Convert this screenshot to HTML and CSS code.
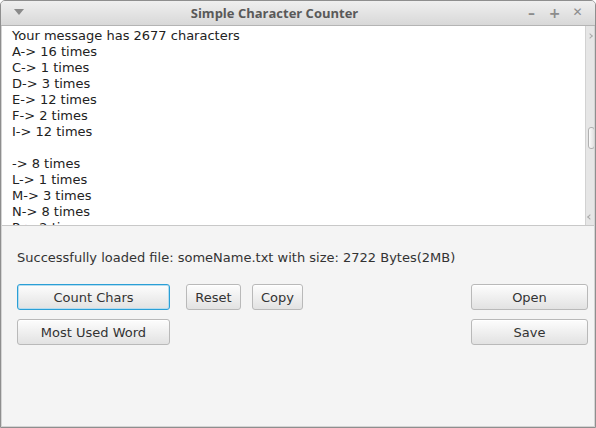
FILE: index.html
```html
<!DOCTYPE html>
<html>
<head>
<meta charset="utf-8">
<link rel="stylesheet" href="styles.css">
</head>
<body>
<div class="window">
  <div class="titlebar">
    <div class="menu-tri"></div>
    <div class="title">Simple Character Counter</div>
    <div class="controls">
      <span class="ctl">&#8211;</span>
      <span class="ctl">+</span>
      <span class="ctl x">&#10005;</span>
    </div>
  </div>
  <div class="textarea">
    <div class="content">
      <div class="line">Your message has 2677 characters</div>
      <div class="line">A-&gt; 16 times</div>
      <div class="line">C-&gt; 1 times</div>
      <div class="line">D-&gt; 3 times</div>
      <div class="line">E-&gt; 12 times</div>
      <div class="line">F-&gt; 2 times</div>
      <div class="line">I-&gt; 12 times</div>
      <div class="line">&nbsp;</div>
      <div class="line">-&gt; 8 times</div>
      <div class="line">L-&gt; 1 times</div>
      <div class="line">M-&gt; 3 times</div>
      <div class="line">N-&gt; 8 times</div>
      <div class="line">P-&gt; 2 times</div>
    </div>
    <div class="scrollbar">
      <div class="arrow up"></div>
      <div class="thumb"></div>
      <div class="arrow down"></div>
    </div>
  </div>
  <div class="panel">
    <div class="status">Successfully loaded file: someName.txt with size: 2722 Bytes(2MB)</div>
    <div class="rows">
      <div class="row">
        <div class="left">
          <button class="btn wide focused">Count Chars</button>
          <button class="btn small">Reset</button>
          <button class="btn small copy">Copy</button>
        </div>
        <button class="btn side">Open</button>
      </div>
      <div class="row">
        <div class="left">
          <button class="btn wide">Most Used Word</button>
        </div>
        <button class="btn side">Save</button>
      </div>
    </div>
  </div>
</div>
</body>
</html>
```

FILE: styles.css
```css
html, body {
  margin: 0;
  padding: 0;
  width: 596px;
  height: 428px;
  overflow: hidden;
  background: #ffffff;
}
.window {
  box-sizing: border-box;
  width: 596px;
  height: 428px;
  border: 1px solid #8e8e8e;
  border-radius: 5px 5px 0 0;
  box-shadow: inset 0 0 0 1px #d4d4d4;
  background: #f4f4f4;
  display: flex;
  flex-direction: column;
  overflow: hidden;
  font-family: "DejaVu Sans", sans-serif;
  font-size: 13px;
  color: #333;
}
.titlebar {
  height: 24px;
  flex: none;
  display: flex;
  align-items: center;
  position: relative;
  background: linear-gradient(#efefef, #d8d8d8);
  border-bottom: 1px solid #b4b4b4;
}
.menu-tri {
  width: 0;
  height: 0;
  margin-left: 13px;
  border-left: 5px solid transparent;
  border-right: 5px solid transparent;
  border-top: 6px solid #8a8a8a;
  margin-top: -2px;
}
.title {
  flex: 1;
  text-align: center;
  font-family: "Open Sans", sans-serif;
  font-weight: bold;
  font-size: 13px;
  color: #595959;
  margin-left: 0;
}
.controls {
  display: flex;
  gap: 10px;
  margin-right: 11px;
}
.ctl {
  width: 13px;
  text-align: center;
  font-family: "DejaVu Sans", sans-serif;
  font-weight: bold;
  font-size: 14px;
  color: #8c8c8c;
}
.ctl.x {
  font-size: 12px;
}
.textarea {
  height: 199px;
  flex: none;
  display: flex;
  background: #fff;
  border-bottom: 1px solid #c8c8c8;
  margin: 0 1px;
  overflow: hidden;
}
.content {
  flex: 1;
  padding: 2px 0 0 10px;
  overflow: hidden;
  color: #222;
}
.line {
  height: 16px;
  line-height: 16px;
  white-space: pre;
}
.scrollbar {
  width: 8px;
  background: #e6e6e6;
  border-left: 1px solid #d2d2d2;
  display: flex;
  flex-direction: column;
  align-items: center;
  padding: 4px 0;
}
.arrow.up {
  transform: rotate(45deg);
  border-right: 1px solid #aaa;
  border-top: 1px solid #aaa;
  width: 3px;
  height: 3px;
  margin-top: 4px;
}
.arrow.down {
  transform: rotate(45deg);
  border-left: 1px solid #aaa;
  border-bottom: 1px solid #aaa;
  width: 3px;
  height: 3px;
  margin-top: auto;
  margin-bottom: 2px;
}
.thumb {
  width: 5px;
  height: 20px;
  margin-top: 89px;
  border: 1px solid #b0b0b0;
  border-radius: 3px;
  background: linear-gradient(90deg, #fbfbfb, #e0e0e0);
  margin-left: 2px;
}
.panel {
  flex: 1;
  padding: 24px 7px 0 16px;
  display: flex;
  flex-direction: column;
}
.status {
  height: 16px;
  line-height: 16px;
  color: #333;
}
.rows {
  margin-top: 18px;
  display: flex;
  flex-direction: column;
  gap: 9px;
}
.row {
  display: flex;
  justify-content: space-between;
}
.left {
  display: flex;
  gap: 12px;
}
.btn {
  box-sizing: border-box;
  height: 26px;
  padding: 0;
  font-family: "DejaVu Sans", sans-serif;
  font-size: 13px;
  color: #333;
  border: 1px solid #b9b9b9;
  border-radius: 3px;
  background: linear-gradient(#fdfdfd, #e2e2e2);
  box-shadow: inset 0 1px 0 #ffffff;
}
.btn.wide { width: 153px; margin-right: 4px; }
.btn.small { width: 55px; }
.btn.copy { width: 51px; margin-left: -1px; }
.btn.side { width: 117px; }
.btn.focused {
  border: 1px solid #2a9fd6;
  box-shadow: inset 0 0 0 1px #b6dcef;
}
```
